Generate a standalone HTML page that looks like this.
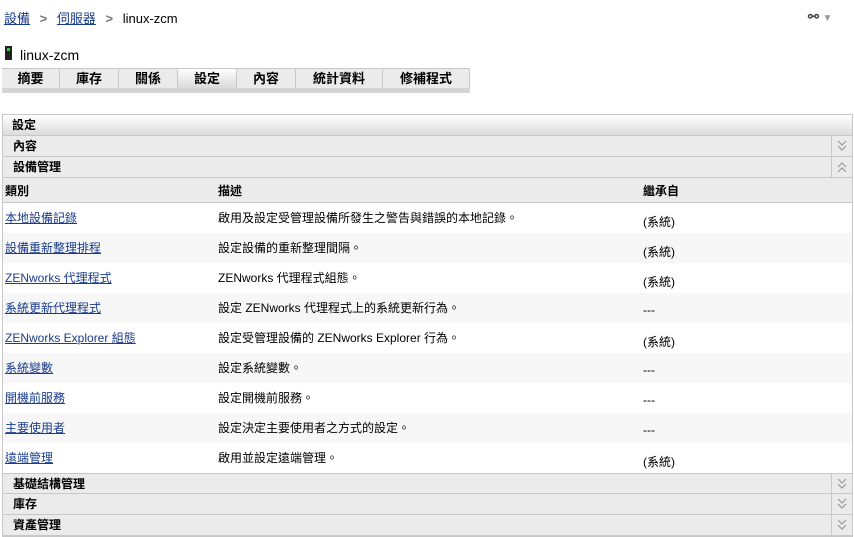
<!DOCTYPE html>
<html><head><meta charset="utf-8"><style>
body{margin:0;width:854px;height:537px;background:#fff;font-family:"Liberation Sans","Noto Sans CJK TC",sans-serif;font-size:12px;color:#000;position:relative;overflow:hidden}
.a{position:absolute}
a{color:#1a3c8c;text-decoration:underline}
.tabs{position:absolute;left:2px;top:68px;height:20px;display:flex;border-top:1px solid #c8c8c8}
.tab{box-sizing:border-box;height:20px;border-right:1px solid #c8c8c8;background:#ebebeb;font-weight:bold;text-align:center;line-height:19px;font-size:13px}
.bar{position:absolute;left:2px;top:88px;width:468px;height:5px;background:#d4d4d4}
.panel{position:absolute;left:2px;top:114px;width:851px;border:1px solid #c8c8c8;box-sizing:border-box}
.sec{height:21px;box-sizing:border-box;border-bottom:1px solid #c8c8c8;background:#ebebeb;font-weight:bold;line-height:20px;padding-left:10px;position:relative}
.chev{position:absolute;right:0;top:0;width:20px;height:20px;border-left:1px solid #c8c8c8}
.chev svg{position:absolute;left:5px;top:4px}
.row{height:30px;position:relative}
.row:nth-child(even){background:#f7f7f7}
.row span{position:absolute;top:6px}
</style></head><body>
<div class="a" style="left:4px;top:8px;font-size:13px"><a>設備</a> <span style="color:#777;font-weight:bold;margin:0 6px">&gt;</span> <a>伺服器</a> <span style="color:#777;font-weight:bold;margin:0 6px">&gt;</span> linux-zcm</div>
<div class="a" style="left:808px;top:9px;color:#444;font-size:13px;font-weight:bold">⚯ <span style="color:#999;font-size:10px;font-weight:normal">▼</span></div>
<div class="a" style="left:5px;top:46px;width:7px;height:14px;background:#222"><div style="margin:2px;width:3px;height:3px;background:#3c3"></div></div>
<div class="a" style="left:20px;top:47px;font-size:14px">linux-zcm</div>
<div class="tabs">
<div class="tab" style="width:58px">摘要</div><div class="tab" style="width:59px">庫存</div><div class="tab" style="width:59px">關係</div><div class="tab" style="width:59px;background:linear-gradient(#fff,#d8d8d8)">設定</div><div class="tab" style="width:59px">內容</div><div class="tab" style="width:87px">統計資料</div><div class="tab" style="width:87px">修補程式</div>
</div>
<div class="bar"></div>
<div class="panel">
<div class="sec" style="background:linear-gradient(#fff,#dcdcdc);padding-left:9px">設定</div>
<div class="sec">內容<div class="chev"><svg width="10" height="12"><path d="M1 1l4 4 4-4M1 6l4 4 4-4" fill="none" stroke="#999" stroke-width="1.2"/></svg></div></div>
<div class="sec">設備管理<div class="chev"><svg width="10" height="12"><path d="M1 6l4-4 4 4M1 11l4-4 4 4" fill="none" stroke="#999" stroke-width="1.2"/></svg></div></div>
<div style="height:25px;background:#ebebeb;border-bottom:1px solid #c8c8c8;box-sizing:border-box;position:relative;font-weight:bold">
<span class="a" style="left:2px;top:4px">類別</span><span class="a" style="left:215px;top:4px">描述</span><span class="a" style="left:640px;top:4px">繼承自</span></div>
<div>
<div class="row"><span style="left:2px"><a>本地設備記錄</a></span><span style="left:215px">啟用及設定受管理設備所發生之警告與錯誤的本地記錄。</span><span style="left:640px;top:10px">(系統)</span></div>
<div class="row"><span style="left:2px"><a>設備重新整理排程</a></span><span style="left:215px">設定設備的重新整理間隔。</span><span style="left:640px;top:10px">(系統)</span></div>
<div class="row"><span style="left:2px"><a>ZENworks 代理程式</a></span><span style="left:215px">ZENworks 代理程式組態。</span><span style="left:640px;top:10px">(系統)</span></div>
<div class="row"><span style="left:2px"><a>系統更新代理程式</a></span><span style="left:215px">設定 ZENworks 代理程式上的系統更新行為。</span><span style="left:640px;top:10px">---</span></div>
<div class="row"><span style="left:2px"><a>ZENworks Explorer 組態</a></span><span style="left:215px">設定受管理設備的 ZENworks Explorer 行為。</span><span style="left:640px;top:10px">(系統)</span></div>
<div class="row"><span style="left:2px"><a>系統變數</a></span><span style="left:215px">設定系統變數。</span><span style="left:640px;top:10px">---</span></div>
<div class="row"><span style="left:2px"><a>開機前服務</a></span><span style="left:215px">設定開機前服務。</span><span style="left:640px;top:10px">---</span></div>
<div class="row"><span style="left:2px"><a>主要使用者</a></span><span style="left:215px">設定決定主要使用者之方式的設定。</span><span style="left:640px;top:10px">---</span></div>
<div class="row"><span style="left:2px"><a>遠端管理</a></span><span style="left:215px">啟用並設定遠端管理。</span><span style="left:640px;top:10px">(系統)</span></div>
</div>
<div class="sec" style="border-top:1px solid #c8c8c8">基礎結構管理<div class="chev"><svg width="10" height="12"><path d="M1 1l4 4 4-4M1 6l4 4 4-4" fill="none" stroke="#999" stroke-width="1.2"/></svg></div></div>
<div class="sec">庫存<div class="chev"><svg width="10" height="12"><path d="M1 1l4 4 4-4M1 6l4 4 4-4" fill="none" stroke="#999" stroke-width="1.2"/></svg></div></div>
<div class="sec">資產管理<div class="chev"><svg width="10" height="12"><path d="M1 1l4 4 4-4M1 6l4 4 4-4" fill="none" stroke="#999" stroke-width="1.2"/></svg></div></div>
</div>
</body></html>
